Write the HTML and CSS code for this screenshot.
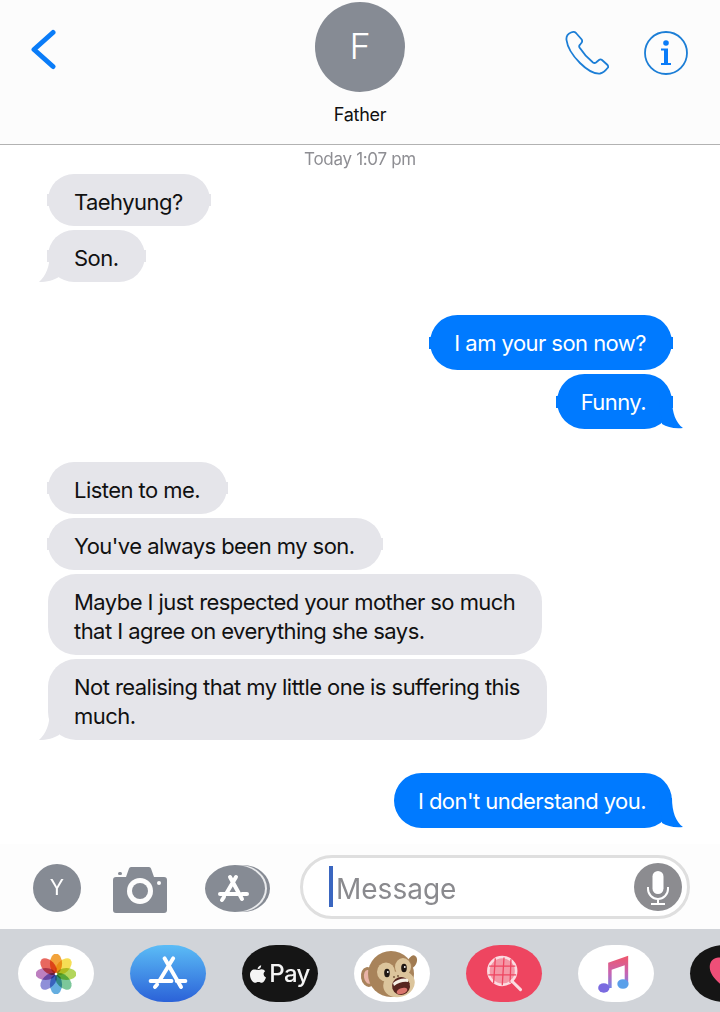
FILE: index.html
```html
<!DOCTYPE html>
<html lang="en">
<head>
  <meta charset="UTF-8">
  <meta name="viewport" content="width=device-width, initial-scale=1.0">
  <title>Father</title>
  <link rel="stylesheet" href="styles.css">
</head>

<body>
  <div class="screen">
    <header class="top-bar">
      <svg class="back" viewBox="0 0 26 40"><path d="M23 3 L4 20 L23 37"/></svg>
      <div class="contact">
        <div class="avatar">F</div>
        <div class="contact-name">Father</div>
      </div>
      <div class="top-actions">
        <svg class="phone" viewBox="0 0 44 44"><path d="M6 1.5 C3.5 2.5 1 5 1.5 9 C2.5 17 9 26 15 32 C21 38 29 43 35 42.5 C38 42 41 39 43 36.5 C43.5 35.5 43 34.5 42 33.5 L37 29 C36 28.2 35 28.2 34 29 L31 31.5 C30 32.2 29 32.2 28 31.5 C23 27.500 18 22 14.500 16.500 C14 15.500 14 14.500 15 13.700 L16.700 11.500 C17.300 10.500 17.300 9.500 16.700 8.500 L11 2 C9.500 0.500 8 0.700 6 1.500 Z"/></svg>
        <svg class="info" viewBox="0 0 44 44">
          <circle cx="22" cy="22" r="21"/>
          <circle class="info-dot" cx="22" cy="12" r="2.800"/>
          <path class="info-stem" d="M17 17.500 H24 V32 H27 V34 H17 V32 H20 V19.500 H17 Z"/>
        </svg>
      </div>
    </header>

    <main class="thread">
      <div class="timestamp">Today 1:07 pm</div>

      <div class="group">
        <div class="bubble in nub">Taehyung?</div>
        <div class="bubble in nub tail">Son.</div>
      </div>

      <div class="group out-group">
        <div class="bubble out nub">I am your son now?</div>
        <div class="bubble out nub tail">Funny.</div>
      </div>

      <div class="group">
        <div class="bubble in nub">Listen to me.</div>
        <div class="bubble in nub">You've always been my son.</div>
        <div class="bubble in">Maybe I just respected your mother so much<br>that I agree on everything she says.</div>
        <div class="bubble in tail">Not realising that my little one is suffering this<br>much.</div>
      </div>

      <div class="group out-group">
        <div class="bubble out tail">I don't understand you.</div>
      </div>
    </main>

    <section class="composer">
      <div class="round-btn">Y</div>
      <svg class="camera" viewBox="0 0 54 46">
        <path d="M18 0 H36 Q37.500 0 38 1.500 L41 10 H51 Q54 10 54 13 V43 Q54 46 51 46 H3 Q0 46 0 43 V13 Q0 10 3 10 H13 L16 1.500 Q16.500 0 18 0 Z"/>
        <circle class="camera-lens" cx="27" cy="24" r="13"/>
        <circle cx="27" cy="24" r="8"/>
        <circle class="camera-lens" cx="46" cy="16" r="2"/>
        <rect x="5" y="5" width="4" height="3" rx="1.500"/>
      </svg>
      <svg class="apps" viewBox="0 0 65 47">
        <ellipse cx="38" cy="23.500" rx="27" ry="23.500" fill="#868b94"/>
        <ellipse cx="35" cy="23.500" rx="27" ry="23.500" fill="#e9eaec"/>
        <ellipse cx="30" cy="23.500" rx="30" ry="23.500" fill="#868b94"/>
        <g class="apps-glyph">
          <path d="M31 12 L21 29 M25 12 L37 34 M15 29 H33 M37 29 H42 M17 35 L19 32"/>
        </g>
      </svg>
      <div class="message-box">
        <span class="cursor"></span>
        <span class="placeholder">Message</span>
        <div class="mic">
          <svg viewBox="0 0 48 48">
            <rect x="18.500" y="8" width="11" height="23" rx="5.500" fill="#fff"/>
            <path d="M14 24 V26 A10 10 0 0 0 34 26 V24 M24 36 V40 M17 41 H31" fill="none" stroke="#fff" stroke-width="2"/>
          </svg>
        </div>
      </div>
    </section>

    <section class="app-tray">
      <div class="tray-item white">
        <svg viewBox="0 0 46 46" class="tray-icon">
          <g>
            <ellipse class="petal" cx="23" cy="11" rx="7" ry="11.500" fill="#f2a33c"/>
            <ellipse class="petal" cx="23" cy="11" rx="7" ry="11.500" fill="#f6de55" transform="rotate(45 23 23)"/>
            <ellipse class="petal" cx="23" cy="11" rx="7" ry="11.500" fill="#b3d65c" transform="rotate(90 23 23)"/>
            <ellipse class="petal" cx="23" cy="11" rx="7" ry="11.500" fill="#7cc79a" transform="rotate(135 23 23)"/>
            <ellipse class="petal" cx="23" cy="11" rx="7" ry="11.500" fill="#65aee0" transform="rotate(180 23 23)"/>
            <ellipse class="petal" cx="23" cy="11" rx="7" ry="11.500" fill="#8f8fd8" transform="rotate(225 23 23)"/>
            <ellipse class="petal" cx="23" cy="11" rx="7" ry="11.500" fill="#bd7fc0" transform="rotate(270 23 23)"/>
            <ellipse class="petal" cx="23" cy="11" rx="7" ry="11.500" fill="#e8685f" transform="rotate(315 23 23)"/>
          </g>
          <circle cx="23" cy="23" r="1.500" fill="#fff"/>
        </svg>
      </div>
      <div class="tray-item store">
        <svg viewBox="0 0 46 46" class="tray-icon glyph-white">
          <path d="M29 5 L13 31 M19 5 L38 38 M3 31 H27 M33 31 H43 M8 38 L10.500 35"/>
        </svg>
      </div>
      <div class="tray-item pay">
        <svg class="apple" viewBox="0 0 20 24"><path d="M14 1 C14 4 12 6 9.500 6 C9.500 3.500 11.500 1.500 14 1 Z M10 7 C11.500 7 12.500 6 14.500 6 C16.500 6 18 7 19 8.500 C16 10.500 16.500 15 20 16.500 C19 19.500 17 23 15 23 C13.500 23 12.500 22 10.500 22 C8.500 22 7.500 23 6 23 C3.500 23 0 18 0 13 C0 9 2.500 6.500 5.500 6.500 C7.500 6.500 8.500 7 10 7 Z"/></svg>
        <span>Pay</span>
      </div>
      <div class="tray-item white">
        <svg viewBox="0 0 60 52" class="monkey">
          <ellipse cx="10" cy="29" rx="7" ry="10" fill="#a9835c" transform="rotate(-10 10 29)"/>
          <ellipse cx="10.500" cy="29" rx="4.500" ry="7" fill="#e8b3a6" transform="rotate(-10 10 29)"/>
          <ellipse cx="54" cy="14" rx="4.500" ry="7" fill="#a07a50" transform="rotate(25 54 14)"/>
          <circle cx="33" cy="26" r="23" fill="#a8835a"/>
          <ellipse cx="28" cy="24" rx="9" ry="9.500" fill="#dcc59c"/>
          <ellipse cx="45" cy="19" rx="8" ry="9" fill="#dcc59c"/>
          <ellipse cx="41" cy="36" rx="16" ry="13" fill="#dcc59c" transform="rotate(-18 41 36)"/>
          <ellipse cx="29" cy="25" rx="2.800" ry="4.200" fill="#1e1612"/>
          <ellipse cx="46" cy="20" rx="2.800" ry="4.200" fill="#1e1612"/>
          <circle cx="29.800" cy="24" r="0.900" fill="#fff"/>
          <circle cx="46.800" cy="19" r="0.900" fill="#fff"/>
          <circle cx="36" cy="29" r="0.900" fill="#6d5136"/>
          <circle cx="40" cy="28" r="0.900" fill="#6d5136"/>
          <ellipse cx="43" cy="38" rx="9" ry="9" fill="#57261f" transform="rotate(-18 43 38)"/>
          <path d="M35 35 Q42 29 50 31 L50 34 Q43 33 36 38 Z" fill="#f5f0e6"/>
          <ellipse cx="44" cy="43" rx="5.500" ry="3" fill="#d9756d" transform="rotate(-18 44 43)"/>
        </svg>
      </div>
      <div class="tray-item search">
        <svg viewBox="0 0 46 46" class="tray-icon">
          <circle cx="21" cy="19.500" r="16" fill="#f497a6" stroke="#fbdde2" stroke-width="3"/>
          <path d="M13 5 L11 34 M23 4 L21 36 M31 6 L30 33 M6 14 H36 M5 24 H37" stroke="#ee4560" stroke-width="1.500" fill="none"/>
          <path d="M32 31 L42 41" stroke="#fbdde2" stroke-width="3.500" stroke-linecap="round"/>
        </svg>
      </div>
      <div class="tray-item white">
        <svg viewBox="0 0 46 46" class="tray-icon">
          <defs>
            <linearGradient id="note" x1="0" y1="0" x2="0" y2="1">
              <stop offset="0" stop-color="#f0566a"/>
              <stop offset="0.550" stop-color="#c665b4"/>
              <stop offset="1" stop-color="#6f86e8"/>
            </linearGradient>
          </defs>
          <path d="M14 10 L37 2 V34 H33 V13 L18 18 V39 H14 Z" fill="url(#note)"/>
          <ellipse cx="9" cy="39" rx="6.500" ry="5.500" fill="#7a6ae0"/>
          <ellipse cx="31" cy="34.500" rx="6.500" ry="5.500" fill="#5aa0ea"/>
        </svg>
      </div>
      <div class="tray-item pay">
        <svg viewBox="0 0 46 46" class="tray-icon heart"><path d="M23 42 C12 33 2 25 2 15 C2 8 7 4 12 4 C17 4 21 7 23 11 C25 7 29 4 34 4 C39 4 44 8 44 15 C44 25 34 33 23 42 Z"/></svg>
      </div>
    </section>
  </div>
</body>
</html>
```

FILE: styles.css
```css
html,
body {
  margin: 0;
  padding: 0;
}

body {
  background-color: #fff;
  font-family: Inter, "Liberation Sans", sans-serif;
  color: #111;
}

.screen {
  width: 720px;
  height: 1012px;
  display: flex;
  flex-direction: column;
  overflow: hidden;
}

/* Barra de cima */
.top-bar {
  position: relative;
  height: 144px;
  flex: none;
  background-color: #fcfcfc;
  border-bottom: 1px solid #b2b2b2;
}

.back {
  position: absolute;
  left: 30px;
  top: 29px;
  width: 26px;
  height: 41px;
  fill: none;
  stroke: #0a7cf8;
  stroke-width: 5;
  stroke-linecap: round;
  stroke-linejoin: round;
}

.contact {
  display: flex;
  flex-direction: column;
  align-items: center;
  padding-top: 2px;
}

.avatar {
  width: 90px;
  height: 90px;
  border-radius: 50%;
  background-color: #868b94;
  color: #fff;
  font-size: 36px;
  font-weight: 300;
  line-height: 88px;
  text-align: center;
}

.contact-name {
  margin-top: 12px;
  font-size: 18px;
  line-height: 22px;
  letter-spacing: -0.3px;
}

.top-actions {
  position: absolute;
  top: 31px;
  right: 32px;
  display: flex;
  gap: 35px;
}

.phone,
.info {
  width: 44px;
  height: 44px;
  fill: none;
  stroke: #1c7ed6;
  stroke-width: 1.8;
}

.info-dot,
.info-stem {
  fill: #0a7cf8;
  stroke: none;
}

/* Mensagens */
.thread {
  flex: 1;
  min-height: 0;
  padding: 0 48px;
  display: flex;
  flex-direction: column;
}

.timestamp {
  margin-top: 4px;
  text-align: center;
  font-size: 17px;
  line-height: 20px;
  color: #8e8e93;
  letter-spacing: -0.3px;
}

.group {
  display: flex;
  flex-direction: column;
  align-items: flex-start;
  gap: 4px;
  margin-top: 33px;
}

.group:nth-child(2) {
  margin-top: 5px;
}

.out-group {
  align-items: flex-end;
}

.bubble {
  position: relative;
  z-index: 0;
  box-sizing: border-box;
  font-size: 22px;
  line-height: 29px;
  letter-spacing: -0.55px;
  white-space: nowrap;
  border-radius: 28px;
}

.in {
  background-color: #e5e5ea;
  color: #111;
  padding: 13.5px 27px 9.5px 26px;
}

.out {
  background-color: #007aff;
  color: #fff;
  padding: 14px 26px 12px 24px;
}

/* pontinha lateral das bolhas de uma linha */
.nub::before {
  content: "";
  position: absolute;
  z-index: -1;
  left: -1px;
  right: -1px;
  top: 50%;
  height: 12px;
  margin-top: -6px;
  background-color: inherit;
}

.in.tail::after,
.out.tail::after {
  content: "";
  position: absolute;
  bottom: 0;
  width: 24px;
  height: 30px;
}

.in.tail::after {
  left: -9px;
  background-color: #e5e5ea;
  clip-path: path("M11 0 C11 14 7 24 0 30 C8 30 15 28 20 25 L24 0 Z");
}

.out.tail::after {
  right: -11px;
  background-color: #007aff;
  clip-path: path("M13 0 C13 14 17 24 24 29 C15 30 8 28 3 25 L0 0 Z");
}

/* Barra de composicao */
.composer {
  flex: none;
  height: 85px;
  background-color: #fdfdfd;
  display: flex;
  align-items: center;
  padding-left: 33px;
  padding-right: 30px;
}

.round-btn {
  width: 48px;
  height: 48px;
  margin-top: 2px;
  flex: none;
  border-radius: 50%;
  background-color: #868b94;
  color: #fff;
  font-size: 21px;
  font-weight: 400;
  line-height: 48px;
  text-align: center;
}

.camera {
  flex: none;
  width: 54px;
  height: 46px;
  margin-top: 6px;
  margin-left: 32px;
  fill: #868b94;
}

.camera-lens {
  fill: #fdfdfd;
}

.apps {
  flex: none;
  width: 65px;
  height: 47px;
  margin-top: 3px;
  margin-left: 38px;
}

.apps-glyph path {
  fill: none;
  stroke: #fff;
  stroke-width: 4;
  stroke-linecap: round;
}

.message-box {
  flex: 1;
  height: 64px;
  margin-left: 30px;
  box-sizing: border-box;
  background-color: #fff;
  border: 3px solid #dfdfdf;
  border-radius: 32px;
  display: flex;
  align-items: center;
  padding: 0 5px 0 26px;
}

.cursor {
  width: 4px;
  height: 41px;
  background-color: #3a66c0;
  flex: none;
}

.placeholder {
  flex: 1;
  margin-left: 3px;
  padding-top: 4px;
  font-size: 28px;
  color: #8a8a8e;
}

.mic {
  width: 48px;
  height: 48px;
  flex: none;
  border-radius: 50%;
  background-color: #8c8c90;
}

.mic svg {
  display: block;
  width: 48px;
  height: 48px;
}

/* Bandeja de apps */
.app-tray {
  flex: none;
  height: 83px;
  background-color: #d1d4d9;
  display: flex;
  align-items: center;
  gap: 36px;
  padding-left: 18px;
  padding-top: 6px;
  box-sizing: border-box;
}

.tray-item {
  flex: none;
  width: 76px;
  height: 57px;
  border-radius: 34px / 28.5px;
  display: flex;
  align-items: center;
  justify-content: center;
}

.white {
  background-color: #fff;
}

.store {
  background: linear-gradient(#5bbcf6, #2b62d8);
}

.pay {
  background-color: #151515;
  color: #f4f4f4;
  font-size: 24px;
  font-weight: 500;
  letter-spacing: -0.7px;
  gap: 3px;
}

.apple {
  width: 16px;
  height: 20px;
  fill: #f4f4f4;
}

.search {
  background-color: #ee4560;
}

.tray-icon {
  width: 40px;
  height: 40px;
}

.petal {
  mix-blend-mode: multiply;
}

.glyph-white path {
  fill: none;
  stroke: #fff;
  stroke-width: 4.5;
  stroke-linecap: round;
}

.heart {
  fill: #ee4f78;
}

.monkey {
  width: 60px;
  height: 52px;
  margin-left: -8px;
}
```
